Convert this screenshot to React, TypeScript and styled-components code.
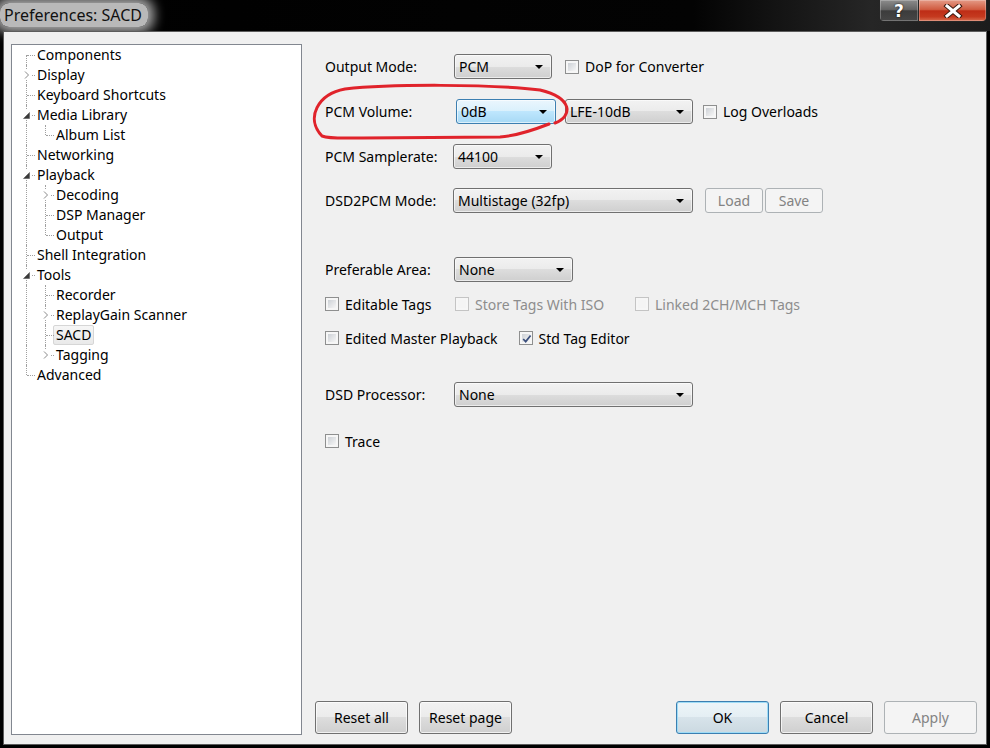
import React from 'react';
import styled, { createGlobalStyle, css } from 'styled-components';

const GlobalStyle = createGlobalStyle`
  html, body {
    margin: 0;
    padding: 0;
    background: #000;
  }
  body {
    font-family: "Noto Sans", "Open Sans", Arial, sans-serif;
    font-size: 14px;
    color: #000;
  }
`

const Window = styled.div`
  position: relative;
  width: 990px;
  height: 748px;
  background: #000;
  display: flex;
  flex-direction: column;
  overflow: hidden;
`

const TitleBar = styled.div`
  flex: none;
  height: 31px;
  display: flex;
  align-items: flex-start;
  background: linear-gradient(90deg, #000 0%, #030303 70%, #262626 88%, #1c1c1c 100%);
`

const TitleText = styled.div`
  margin: 3px 0 0 0;
  padding: 1px 6px 1px 4px;
  font-size: 16px;
  line-height: 22px;
  color: #111;
  background: rgba(205, 205, 205, 0.9);
  border-radius: 9px;
  box-shadow: 0 0 12px 6px rgba(200, 200, 200, 0.85);
`

const CaptionGroup = styled.div`
  margin-left: auto;
  margin-right: 3px;
  height: 21px;
  display: flex;
  border: 1px solid #262626;
  border-top: none;
  border-radius: 0 0 5px 5px;
  overflow: hidden;
`

const CaptionButton = styled.div<{ $close?: boolean }>`
  width: ${p => (p.$close ? 67 : 38)}px;
  display: flex;
  align-items: center;
  justify-content: center;
  color: #fff;
  font-family: "DejaVu Sans", sans-serif;
  font-weight: bold;
  font-size: 17px;
  text-shadow: 0 0 2px #000;
  box-shadow: inset 0 0 0 1px rgba(255, 255, 255, 0.25);
  background: ${p =>
    p.$close
      ? 'linear-gradient(#e49a86 0%, #d05b40 45%, #be2d16 52%, #c53a1f 80%, #d86c4e 100%)'
      : 'linear-gradient(#8c8c8c 0%, #646464 45%, #3c3c3c 52%, #464646 100%)'};
  & + & {
    border-left: 1px solid #262626;
  }
`

const Body = styled.div`
  flex: 1;
  margin: 0 3px 3px;
  display: flex;
  background: #f0f0f0;
  border: 1px solid #5c5c5c;
`

/* ---------- tree ---------- */

const Tree = styled.div`
  flex: none;
  width: 289px;
  margin: 12px 0 9px 7px;
  background: #fff;
  border: 1px solid #828790;
`

const TreeRow = styled.div`
  height: 20px;
  display: flex;
  align-items: center;
`

const Guide = styled.span<{ $line: boolean }>`
  position: relative;
  flex: none;
  width: 19px;
  height: 20px;
  ${p => p.$line && css`
    &::before {
      content: '';
      position: absolute;
      left: 14px;
      top: 0;
      bottom: 0;
      border-left: 1px dotted #a0a0a0;
    }
  `}
`

const Branch = styled.span<{ $first?: boolean; $last?: boolean }>`
  position: relative;
  flex: none;
  width: 22px;
  height: 20px;

  &::before {
    content: '';
    position: absolute;
    left: 14px;
    top: ${p => (p.$first ? 10 : 0)}px;
    bottom: ${p => (p.$last ? 10 : 0)}px;
    border-left: 1px dotted #a0a0a0;
  }
  &::after {
    content: '';
    position: absolute;
    left: 15px;
    top: 10px;
    width: 8px;
    border-top: 1px dotted #a0a0a0;
  }
`

const Expander = styled.span`
  position: absolute;
  z-index: 1;
  left: 9px;
  top: 5px;
  width: 11px;
  height: 10px;
  background: #fff;
  display: flex;
`

const TreeLabel = styled.span<{ $selected?: boolean }>`
  padding: 0 2px;
  line-height: 18px;
  border: 1px solid transparent;
  border-radius: 2px;
  white-space: nowrap;
  ${p => p.$selected && css`
    background: linear-gradient(#f6f6f6, #e9e9e9);
    border-color: #d6d6d6;
  `}
`

type Node = {
  label: string
  level: number
  exp?: 'open' | 'closed'
  last?: boolean
  selected?: boolean
}

const nodes: Node[] = [
  { label: 'Components', level: 0 },
  { label: 'Display', level: 0, exp: 'closed' },
  { label: 'Keyboard Shortcuts', level: 0 },
  { label: 'Media Library', level: 0, exp: 'open' },
  { label: 'Album List', level: 1, last: true },
  { label: 'Networking', level: 0 },
  { label: 'Playback', level: 0, exp: 'open' },
  { label: 'Decoding', level: 1, exp: 'closed' },
  { label: 'DSP Manager', level: 1 },
  { label: 'Output', level: 1, last: true },
  { label: 'Shell Integration', level: 0 },
  { label: 'Tools', level: 0, exp: 'open' },
  { label: 'Recorder', level: 1 },
  { label: 'ReplayGain Scanner', level: 1, exp: 'closed' },
  { label: 'SACD', level: 1, selected: true },
  { label: 'Tagging', level: 1, exp: 'closed', last: true },
  { label: 'Advanced', level: 0, last: true },
]

function ExpandIcon({ open }: { open: boolean }) {
  return (
    <svg width="11" height="10" viewBox="0 0 11 10">
      {open
        ? <polygon points="8.5,2.5 8.5,8.5 2.5,8.5" fill="#3a3a3a" stroke="#555" strokeWidth="0.6" />
        : <path d="M4 1.5 L7.5 5 L4 8.5" fill="none" stroke="#8a8a8a" strokeWidth="1" />}
    </svg>
  )
}

function PrefTree() {
  return (
    <Tree>
      {nodes.map((n, i) => (
        <TreeRow key={n.label}>
          {Array.from({ length: n.level }).map((_, k) => <Guide key={k} $line />)}
          <Branch $first={i === 0} $last={n.last}>
            {n.exp && <Expander><ExpandIcon open={n.exp === 'open'} /></Expander>}
          </Branch>
          <TreeLabel $selected={n.selected}>{n.label}</TreeLabel>
        </TreeRow>
      ))}
    </Tree>
  )
}

/* ---------- settings panel ---------- */

const Panel = styled.div`
  flex: 1;
  display: flex;
  flex-direction: column;
  justify-content: space-between;
  padding: 22px 9px 10px 13px;
`

const Settings = styled.div`
  margin-left: 10px;
  display: flex;
  flex-direction: column;
`

const Row = styled.div<{ $mt?: number; $h?: number }>`
  display: flex;
  align-items: center;
  height: ${p => p.$h ?? 25}px;
  margin-top: ${p => p.$mt ?? 0}px;
`

const FieldLabel = styled.span`
  flex: none;
  width: 129px;
  white-space: nowrap;
`

const Combo = styled.div<{ $w: number; $hot?: boolean; $ml?: number }>`
  flex: none;
  box-sizing: border-box;
  width: ${p => p.$w}px;
  height: 25px;
  margin-left: ${p => p.$ml ?? 0}px;
  padding: 0 8px 0 4px;
  display: flex;
  align-items: center;
  border: 1px solid #707070;
  border-radius: 3px;
  background: linear-gradient(#f2f2f2 0%, #ebebeb 50%, #dddddd 50%, #cfcfcf 100%);
  box-shadow: inset 0 0 0 1px rgba(255, 255, 255, 0.6);
  ${p => p.$hot && css`
    border-color: #3c7fb1;
    background: linear-gradient(#eaf6fd 0%, #d9f0fc 50%, #bee6fd 50%, #a7d9f5 100%);
  `}
`

const ComboText = styled.span`
  flex: 1;
  white-space: nowrap;
`

const Arrow = styled.span`
  flex: none;
  width: 0;
  height: 0;
  border-left: 4px solid transparent;
  border-right: 4px solid transparent;
  border-top: 4px solid #000;
`

const Box = styled.span<{ $disabled?: boolean }>`
  flex: none;
  box-sizing: border-box;
  width: 14px;
  height: 14px;
  padding: 2px;
  display: flex;
  border: 1px solid ${p => (p.$disabled ? '#c4c4c4' : '#8e8f8f')};
  background: #f6f6f6;

  &::before {
    content: '';
    flex: 1;
    background: ${p => (p.$disabled ? '#f4f4f4' : 'linear-gradient(135deg, #cdd1d6, #f6f6f6)')};
  }
`

const CheckedBox = styled(Box)`
  position: relative;
  & > svg {
    position: absolute;
    left: 0;
    top: 0;
  }
`

const CheckItem = styled.label<{ $w?: number; $ml?: number; $disabled?: boolean }>`
  flex: none;
  display: flex;
  align-items: center;
  gap: 6px;
  width: ${p => (p.$w ? `${p.$w}px` : 'auto')};
  margin-left: ${p => p.$ml ?? 0}px;
  color: ${p => (p.$disabled ? '#8d8d8d' : '#000')};
  white-space: nowrap;
`

const Button = styled.div<{ $w?: number; $h?: number; $disabled?: boolean; $default?: boolean; $ml?: number }>`
  flex: none;
  box-sizing: border-box;
  width: ${p => p.$w ?? 93}px;
  height: ${p => p.$h ?? 33}px;
  margin-left: ${p => p.$ml ?? 0}px;
  display: flex;
  align-items: center;
  justify-content: center;
  border: 1px solid #707070;
  border-radius: 3px;
  background: linear-gradient(#f2f2f2 0%, #ebebeb 50%, #dddddd 50%, #cfcfcf 100%);
  box-shadow: inset 0 0 0 1px rgba(255, 255, 255, 0.7);
  ${p => p.$default && css`
    border-color: #3c7fb1;
    box-shadow: inset 0 0 0 1px #9fdcf6;
    background: linear-gradient(#edf5f9 0%, #e4eef3 50%, #d7e3ea 50%, #cbd9e1 100%);
  `}
  ${p => p.$disabled && css`
    border-color: #adb2b5;
    background: #f4f4f4;
    box-shadow: none;
    color: #838383;
  `}
`

const ButtonBar = styled.div`
  display: flex;
  align-items: center;
  justify-content: space-between;
`

const ButtonGroup = styled.div`
  display: flex;
  gap: 11px;
`

const Annotation = styled.svg`
  position: absolute;
  left: 0;
  top: 0;
  pointer-events: none;
`

function Check({ label, checked, disabled, w, ml }: { label: string; checked?: boolean; disabled?: boolean; w?: number; ml?: number }) {
  return (
    <CheckItem $w={w} $ml={ml} $disabled={disabled}>
      {checked ? (
        <CheckedBox>
          <svg width="14" height="14" viewBox="0 0 14 14">
            <path d="M3.2 7 L5.7 9.6 L10.6 3.5" fill="none" stroke="#3b4f7c" strokeWidth="1.7" />
          </svg>
        </CheckedBox>
      ) : (
        <Box $disabled={disabled} />
      )}
      {label}
    </CheckItem>
  )
}

function Select({ value, w, hot, ml }: { value: string; w: number; hot?: boolean; ml?: number }) {
  return (
    <Combo $w={w} $hot={hot} $ml={ml}>
      <ComboText>{value}</ComboText>
      <Arrow />
    </Combo>
  )
}

export default function App() {
  return (
    <Window>
      <GlobalStyle />
      <TitleBar>
        <TitleText>Preferences: SACD</TitleText>
        <CaptionGroup>
          <CaptionButton>?</CaptionButton>
          <CaptionButton $close>
            <svg width="20" height="14" viewBox="0 0 20 14">
              <path d="M4 2 L16 12 M16 2 L4 12" stroke="#3a1a10" strokeWidth="5" strokeLinecap="square" />
              <path d="M4 2 L16 12 M16 2 L4 12" stroke="#fff" strokeWidth="3" strokeLinecap="square" />
            </svg>
          </CaptionButton>
        </CaptionGroup>
      </TitleBar>

      <Body>
        <PrefTree />
        <Panel>
          <Settings>
            <Row>
              <FieldLabel>Output Mode:</FieldLabel>
              <Select value="PCM" w={98} />
              <Check label="DoP for Converter" ml={13} />
            </Row>
            <Row $mt={20}>
              <FieldLabel>PCM Volume:</FieldLabel>
              <Select value="0dB" w={100} hot ml={2} />
              <Select value="LFE-10dB" w={128} ml={9} />
              <Check label="Log Overloads" ml={10} />
            </Row>
            <Row $mt={20}>
              <FieldLabel>PCM Samplerate:</FieldLabel>
              <Select value="44100" w={99} ml={-1} />
            </Row>
            <Row $mt={19}>
              <FieldLabel>DSD2PCM Mode:</FieldLabel>
              <Select value="Multistage (32fp)" w={240} ml={-1} />
              <Button $w={58} $h={25} $disabled $ml={12}>Load</Button>
              <Button $w={58} $h={25} $disabled $ml={2}>Save</Button>
            </Row>
            <Row $mt={44}>
              <FieldLabel>Preferable Area:</FieldLabel>
              <Select value="None" w={119} />
            </Row>
            <Row $mt={12} $h={20}>
              <Check label="Editable Tags" w={130} />
              <Check label="Store Tags With ISO" w={180} disabled />
              <Check label="Linked 2CH/MCH Tags" disabled />
            </Row>
            <Row $mt={14} $h={20}>
              <Check label="Edited Master Playback" />
              <Check label="Std Tag Editor" checked ml={21} />
            </Row>
            <Row $mt={34}>
              <FieldLabel>DSD Processor:</FieldLabel>
              <Select value="None" w={239} />
            </Row>
            <Row $mt={24} $h={20}>
              <Check label="Trace" />
            </Row>
          </Settings>

          <ButtonBar>
            <ButtonGroup>
              <Button>Reset all</Button>
              <Button>Reset page</Button>
            </ButtonGroup>
            <ButtonGroup>
              <Button $default>OK</Button>
              <Button>Cancel</Button>
              <Button $disabled>Apply</Button>
            </ButtonGroup>
          </ButtonBar>
        </Panel>
      </Body>

      <Annotation width="990" height="748" viewBox="0 0 990 748">
        <path
          d="M 555 123 C 573 116, 573 98, 540 90 C 490 84, 390 84, 345 89 C 318 94, 305 118, 322 136 C 330 139, 342 138, 362 138 L 500 137 C 516 136, 531 131, 549 124"
          fill="none"
          stroke="#e0232b"
          strokeWidth="3"
          strokeLinecap="round"
          strokeLinejoin="round"
        />
      </Annotation>
    </Window>
  )
}
